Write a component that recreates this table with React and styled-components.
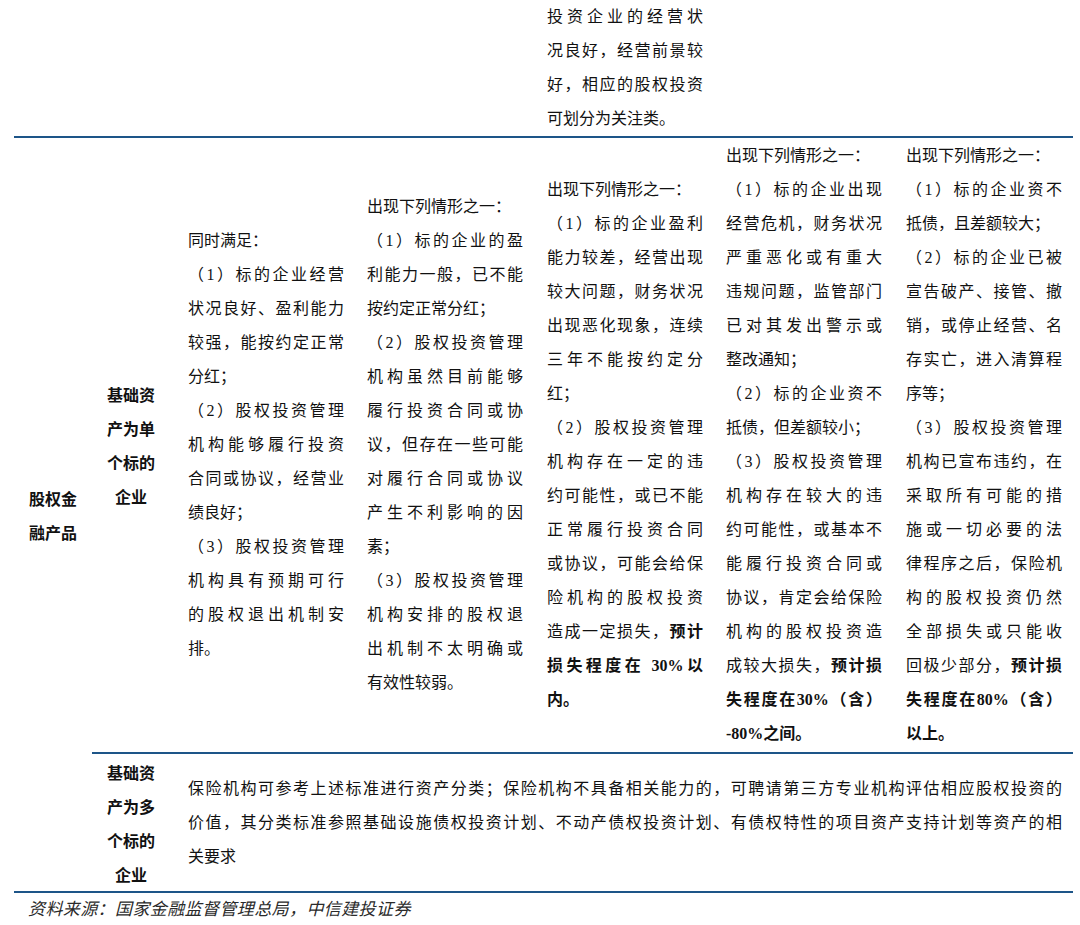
import styled, { createGlobalStyle } from 'styled-components';

const GlobalStyle = createGlobalStyle`
  html, body {
    margin: 0;
    padding: 0;
    background: #fff;
  }
  body {
    font-family: 'Liberation Serif', 'Noto Sans CJK SC', serif;
    color: #111;
  }
`;

const RULE = '#1d5588';

const Page = styled.div`
  width: 1080px;
  padding-left: 14px;
  box-sizing: border-box;
`;

const Table = styled.table`
  width: 1059px;
  table-layout: fixed;
  border-collapse: separate;
  border-spacing: 0;
  font-size: 16px;
  line-height: 34px;
`;

const Cell = styled.td`
  vertical-align: middle;
  padding: ${(p) => p.$pad || '1px 0 1px 8px'};
  border-bottom: 2px solid ${RULE};
`;

const LabelCell = styled(Cell)`
  text-align: center;
  font-family: 'Noto Sans CJK SC', sans-serif;
  font-weight: 700;
  padding: ${(p) => p.$pad || '0'};
`;

const Block = styled.div`
  width: ${(p) => p.$w || 156}px;
`;

const Line = styled.div`
  text-align: ${(p) => (p.$last ? 'left' : 'justify')};
  text-align-last: ${(p) => (p.$last ? 'left' : 'justify')};
`;

const Strong = styled.b`
  font-weight: 700;
  font-family: 'Liberation Serif', 'Noto Sans CJK SC', serif;
`;

const Source = styled.div`
  padding-left: 14px;
  font-size: 17px;
  letter-spacing: 0.4px;
  line-height: 34px;
  font-style: italic;
  color: #2a2a2a;
`;

const rich = (str) =>
  str.split(/(\*\*[^*]+\*\*)/).filter(Boolean).map((part, i) =>
    part.startsWith('**') ? <Strong key={i}>{part.slice(2, -2)}</Strong> : <span key={i}>{part}</span>
  );

const Text = ({ paras, width }) => (
  <Block $w={width}>
    {paras.map((lines, pi) =>
      lines.map((l, li) => (
        <Line key={`${pi}-${li}`} $last={li === lines.length - 1}>
          {rich(l)}
        </Line>
      ))
    )}
  </Block>
);

const Stack = ({ lines }) => lines.map((l) => <div key={l}>{l}</div>);

const topNote = [['投资企业的经营状', '况良好，经营前景较', '好，相应的股权投资', '可划分为关注类。']];

const columns = [
  [
    ['同时满足：'],
    ['（1）标的企业经营', '状况良好、盈利能力', '较强，能按约定正常', '分红；'],
    ['（2）股权投资管理', '机构能够履行投资', '合同或协议，经营业', '绩良好；'],
    ['（3）股权投资管理', '机构具有预期可行', '的股权退出机制安', '排。'],
  ],
  [
    ['出现下列情形之一：'],
    ['（1）标的企业的盈', '利能力一般，已不能', '按约定正常分红；'],
    ['（2）股权投资管理', '机构虽然目前能够', '履行投资合同或协', '议，但存在一些可能', '对履行合同或协议', '产生不利影响的因', '素；'],
    ['（3）股权投资管理', '机构安排的股权退', '出机制不太明确或', '有效性较弱。'],
  ],
  [
    ['出现下列情形之一：'],
    ['（1）标的企业盈利', '能力较差，经营出现', '较大问题，财务状况', '出现恶化现象，连续', '三年不能按约定分', '红；'],
    ['（2）股权投资管理', '机构存在一定的违', '约可能性，或已不能', '正常履行投资合同', '或协议，可能会给保', '险机构的股权投资', '造成一定损失，**预计**', '**损失程度在 30%以**', '**内。**'],
  ],
  [
    ['出现下列情形之一：'],
    ['（1）标的企业出现', '经营危机，财务状况', '严重恶化或有重大', '违规问题，监管部门', '已对其发出警示或', '整改通知；'],
    ['（2）标的企业资不', '抵债，但差额较小；'],
    ['（3）股权投资管理', '机构存在较大的违', '约可能性，或基本不', '能履行投资合同或', '协议，肯定会给保险', '机构的股权投资造', '成较大损失，**预计损**', '**失程度在30%（含）**', '**-80%之间。**'],
  ],
  [
    ['出现下列情形之一：'],
    ['（1）标的企业资不', '抵债，且差额较大；'],
    ['（2）标的企业已被', '宣告破产、接管、撤', '销，或停止经营、名', '存实亡，进入清算程', '序等；'],
    ['（3）股权投资管理', '机构已宣布违约，在', '采取所有可能的措', '施或一切必要的法', '律程序之后，保险机', '构的股权投资仍然', '全部损失或只能收', '回极少部分，**预计损**', '**失程度在80%（含）**', '**以上。**'],
  ],
];

const multiNote = [
  [
    '保险机构可参考上述标准进行资产分类；保险机构不具备相关能力的，可聘请第三方专业机构评估相应股权投资的',
    '价值，其分类标准参照基础设施债权投资计划、不动产债权投资计划、有债权特性的项目资产支持计划等资产的相',
    '关要求',
  ],
];

const widths = [78, 88, 179, 180, 179, 180, 175];

export default function App() {
  return (
    <Page>
      <GlobalStyle />
      <Table>
        <colgroup>
          {widths.map((w, i) => (
            <col key={i} style={{ width: w }} />
          ))}
        </colgroup>
        <tbody>
          <tr>
            <Cell />
            <Cell />
            <Cell />
            <Cell />
            <Cell $pad="0 0 0 8px">
              <Text paras={topNote} />
            </Cell>
            <Cell />
            <Cell />
          </tr>
          <tr>
            <LabelCell rowSpan={2}>
              <Stack lines={['股权金', '融产品']} />
            </LabelCell>
            <LabelCell $pad="1px 10px 1px 0">
              <Stack lines={['基础资', '产为单', '个标的', '企业']} />
            </LabelCell>
            {columns.map((paras, i) => (
              <Cell key={i}>
                <Text paras={paras} />
              </Cell>
            ))}
          </tr>
          <tr>
            <LabelCell $pad="1px 10px 0 0">
              <Stack lines={['基础资', '产为多', '个标的', '企业']} />
            </LabelCell>
            <Cell colSpan={5} $pad="1px 0 0 8px">
              <Text paras={multiNote} width={874} />
            </Cell>
          </tr>
        </tbody>
      </Table>
      <Source>资料来源：国家金融监督管理总局，中信建投证券</Source>
    </Page>
  );
}
